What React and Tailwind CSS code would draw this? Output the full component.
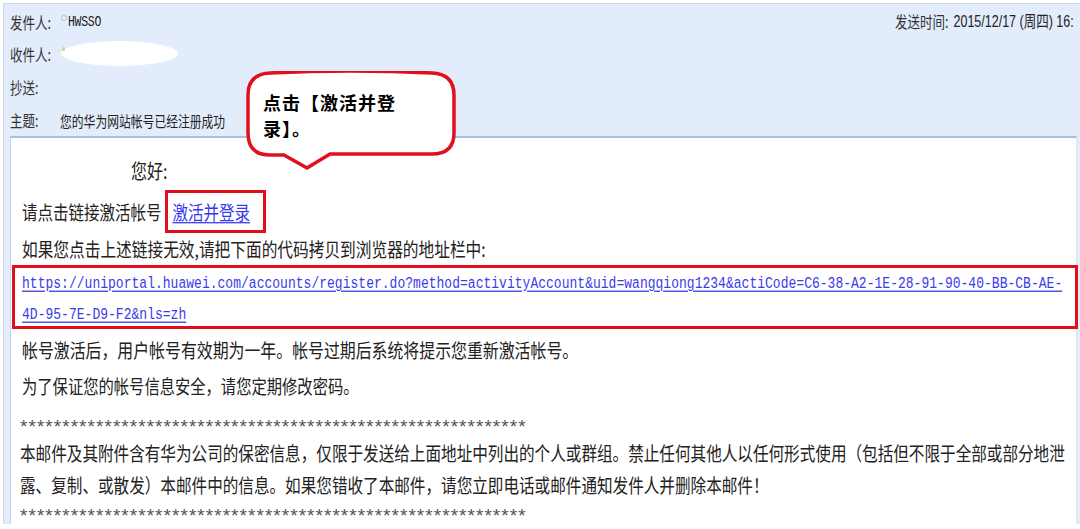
import React from "react";

const CJK = "font-['Noto_Sans_CJK_SC','Noto_Sans',sans-serif]";

function Bubble() {
  return (
    <>
      <svg
        className="absolute left-[246px] top-[71px]"
        width="212"
        height="100"
        viewBox="0 0 212 100"
      >
        <path
          d="M 24 2 Q 105 -2 186 2 Q 208 3 208 24 V 62 Q 208 83 186 83 H 84 L 61 97 L 38 84 H 24 Q 2 84 2 62 V 24 Q 2 3 24 2 Z"
          fill="white"
          stroke="#e2101c"
          strokeWidth="3.5"
          strokeLinejoin="round"
        />
      </svg>
      <div
        className={`absolute left-[263px] top-[89px] text-[18px] leading-[26px] font-bold text-black tracking-[1px] ${CJK}`}
      >
        <div>点击【激活并登</div>
        <div>录】。</div>
      </div>
    </>
  );
}

function HeaderLabel({ children }) {
  return (
    <div className="w-[50px] shrink-0">
      <span className={`inline-block scale-y-[1.3] text-[12.5px] text-[#333] ${CJK}`}>
        {children}
      </span>
    </div>
  );
}

function Line({ className = "", size = "text-[15.5px]", children }) {
  return (
    <div className={`h-[32px] shrink-0 flex items-center ${className}`}>
      <span className={`inline-block scale-y-[1.25] ${size} text-[#222] whitespace-nowrap ${CJK}`}>
        {children}
      </span>
    </div>
  );
}

function Stars({ className = "" }) {
  return (
    <div className={`shrink-0 flex items-center overflow-visible ${className}`}>
      <span className="inline-block translate-y-[4px] font-['Liberation_Sans',sans-serif] text-[19px] leading-none tracking-[1.05px] text-[#555] whitespace-nowrap">
        {"*".repeat(60)}
      </span>
    </div>
  );
}

export default function App() {
  const url1 =
    "https://uniportal.huawei.com/accounts/register.do?method=activityAccount&uid=wangqiong1234&actiCode=C6-38-A2-1E-28-91-90-40-BB-CB-AE-";
  const url2 = "4D-95-7E-D9-F2&nls=zh";
  return (
    <div className="w-[1080px] h-[529px] bg-white overflow-hidden relative">
      <div className="ml-[3px] mt-[3px] h-[521px] border-t border-l border-[#cdd6e2] bg-[#e3ecfb] flex flex-col overflow-hidden">
        {/* header */}
        <div className="h-[132px] shrink-0 pt-[2px] pl-[6px] flex flex-col">
          <div className="h-[32px] flex items-center">
            <div className="w-[885px] shrink-0 flex items-center">
              <HeaderLabel>发件人:</HeaderLabel>
              <span className="ml-[1px] mb-[8px] w-[6px] h-[6px] rounded-full border border-[#b9bdc4] bg-[#eef0f3]" />
              <span className="ml-[1px] inline-block scale-y-[1.35] font-['Liberation_Mono',monospace] text-[11.5px] tracking-[-0.3px] text-[#222]">
                HWSSO
              </span>
            </div>
            <div className="flex items-center whitespace-nowrap">
              <span className={`inline-block scale-y-[1.3] text-[12.5px] text-[#333] ${CJK}`}>发送时间:</span>
              <span className="ml-[5px] inline-block scale-y-[1.3] font-['Liberation_Sans',sans-serif] text-[12.5px] text-[#222]">
                2015/12/17 (<span className={CJK}>周四</span>) 16:
              </span>
            </div>
          </div>
          <div className="h-[32px] flex items-center">
            <HeaderLabel>收件人:</HeaderLabel>
            <div className="relative ml-[1px] mt-[-2px] w-[117px] h-[25px] rounded-[50%] bg-white">
              <span className="absolute left-[1px] top-[6px] w-[3px] h-[4px] rounded-full bg-[#d9cf9a]" />
            </div>
          </div>
          <div className="h-[33px] flex items-center">
            <HeaderLabel>抄送:</HeaderLabel>
          </div>
          <div className="h-[33px] flex items-center">
            <HeaderLabel>主题:</HeaderLabel>
            <span className={`inline-block scale-y-[1.3] text-[11.8px] text-[#222] ${CJK}`}>
              您的华为网站帐号已经注册成功
            </span>
          </div>
        </div>

        {/* body */}
        <div className="ml-[6px] w-[1067px] flex-1 bg-white border-t-2 border-t-[#a7bfe8] border-l border-l-[#c5d3ec] border-r border-r-[#dfe6f2] pl-[11px] flex flex-col">
          <Line className="mt-[16px] ml-[109px]" size="text-[16px]">您好:</Line>
          <div className="mt-[4px] h-[43px] shrink-0 flex items-center">
            <span className={`inline-block scale-y-[1.25] text-[15.5px] text-[#222] whitespace-nowrap ${CJK}`}>
              请点击链接激活帐号
            </span>
            <div className="ml-[3px] h-[43px] border-[3px] border-[#e0101b] pl-[5px] pr-[13px] flex items-center">
              <span
                className={`inline-block scale-y-[1.25] text-[15.5px] text-[#3838f0] underline underline-offset-2 whitespace-nowrap ${CJK}`}
              >
                激活并登录
              </span>
            </div>
          </div>
          <Line className="h-[30px]" size="text-[15.7px]">如果您点击上述链接无效,请把下面的代码拷贝到浏览器的地址栏中:</Line>
          <div className="-ml-[10px] w-[1066px] h-[64px] shrink-0 border-[3px] border-[#e0101b] pl-[7px] flex flex-col">
            {[url1, url2].map((u) => (
              <div key={u} className="h-[31px] shrink-0 flex items-center">
                <span className="inline-block scale-y-[1.3] font-['Liberation_Mono',monospace] text-[13px] tracking-[0.02px] text-[#3b3be8] underline underline-offset-2 whitespace-nowrap">
                  {u}
                </span>
              </div>
            ))}
          </div>
          <Line className="mt-[5px]" size="text-[15.9px]">
            帐号激活后，用户帐号有效期为一年。帐号过期后系统将提示您重新激活帐号。
          </Line>
          <Line className="mt-[3px]" size="text-[15.3px]">为了保证您的帐号信息安全，请您定期修改密码。</Line>
          <Stars className="mt-[6px] h-[30px] -ml-[2px]" />
          <Line className="-ml-[2px]" size="text-[15.6px]">
            本邮件及其附件含有华为公司的保密信息，仅限于发送给上面地址中列出的个人或群组。禁止任何其他人以任何形式使用（包括但不限于全部或部分地泄
          </Line>
          <Line className="-ml-[2px]" size="text-[15.6px]">
            露、复制、或散发）本邮件中的信息。如果您错收了本邮件，请您立即电话或邮件通知发件人并删除本邮件！
          </Line>
          <Stars className="h-[20px] -ml-[2px]" />
        </div>
      </div>
      <Bubble />
    </div>
  );
}
